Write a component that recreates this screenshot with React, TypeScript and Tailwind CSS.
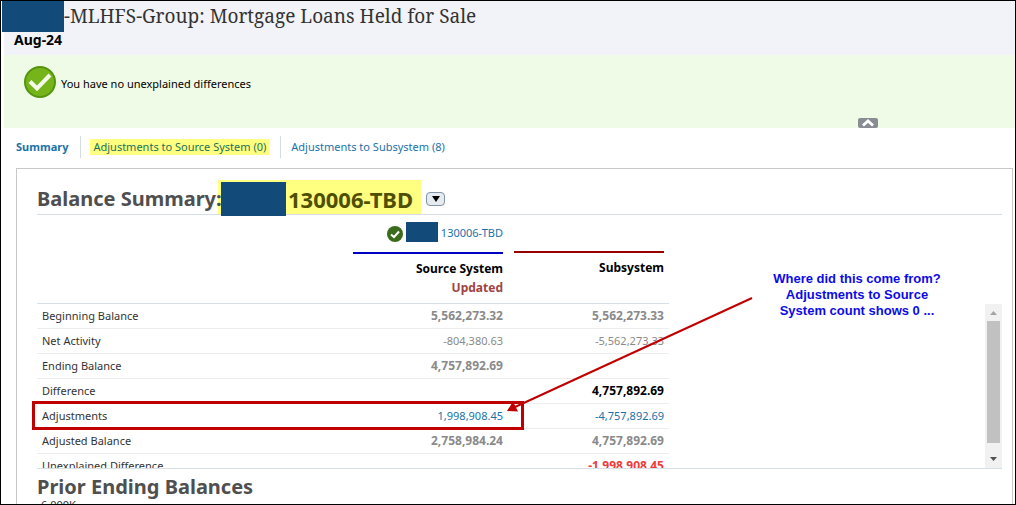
import { clsx } from "clsx";

type Cell = { text: string; className?: string; href?: string };
type Row = { label: string; source?: Cell; subsystem?: Cell };

const muted = "text-[12px] font-bold text-[#8a8a8a]";
const light = "text-[#8a8a8a]";
const link = "text-[#1a72aa]";

const rows: Row[] = [
  { label: "Beginning Balance", source: { text: "5,562,273.32", className: muted }, subsystem: { text: "5,562,273.33", className: muted } },
  { label: "Net Activity", source: { text: "-804,380.63", className: light }, subsystem: { text: "-5,562,273.33", className: light } },
  { label: "Ending Balance", source: { text: "4,757,892.69", className: muted } },
  { label: "Difference", subsystem: { text: "4,757,892.69", className: "text-[12px] font-bold text-black" } },
  {
    label: "Adjustments",
    source: { text: "1,998,908.45", className: link, href: "#source" },
    subsystem: { text: "-4,757,892.69", className: link, href: "#subsystem" },
  },
  { label: "Adjusted Balance", source: { text: "2,758,984.24", className: muted }, subsystem: { text: "4,757,892.69", className: muted } },
  { label: "Unexplained Difference", subsystem: { text: "-1,998,908.45", className: "text-[12px] font-bold text-[#f03a3a]" } },
];

function Redacted({ className }: { className: string }) {
  return <span aria-hidden="true" className={clsx("block shrink-0 bg-[#124b7a]", className)} />;
}

function Amount({ cell }: { cell?: Cell }) {
  return (
    <td className="border-b border-[#ededed] pr-[5px] text-right">
      {cell?.href ? (
        <a href={cell.href} className={cell.className}>
          {cell.text}
        </a>
      ) : (
        <span className={cell?.className}>{cell?.text}</span>
      )}
    </td>
  );
}

function PageHeader() {
  return (
    <header className="h-[54px] shrink-0 bg-[#f2f3f8]">
      <div className="-ml-[2px] flex h-[31px]">
        <Redacted className="h-[31px] w-[62px]" />
        <h1 className="font-['Noto_Serif','Liberation_Serif',serif] text-[19px] leading-[30px] whitespace-nowrap text-[#333]">
          -MLHFS-Group: Mortgage Loans Held for Sale
        </h1>
      </div>
      <p className="pl-[10px] text-[14px] leading-4 font-bold text-black">Aug-24</p>
    </header>
  );
}

function StatusBanner() {
  return (
    <section className="flex h-[73px] shrink-0 items-start justify-between bg-[#effbe7] pl-5">
      <div className="flex items-center gap-[5px] pt-[11px] text-black">
        <svg viewBox="0 0 32 32" className="h-8 w-8" aria-hidden="true">
          <circle cx="16" cy="16" r="15" fill="#75b51a" stroke="#56930f" strokeWidth="2" />
          <path d="M6 15.500 L13 22.500 L26 9" fill="none" stroke="#f4fbea" strokeWidth="4" />
        </svg>
        <span className="pt-1">You have no unexplained differences</span>
      </div>
      <button aria-label="Collapse" className="mr-[137px] h-[10px] w-5 self-end rounded-xs bg-[#898c92]">
        <svg viewBox="0 0 20 10" className="h-[10px] w-5" aria-hidden="true">
          <path d="M5 7.500 L10 3 L15 7.500" fill="none" stroke="#fff" strokeWidth="2.800" />
        </svg>
      </button>
    </section>
  );
}

function Tabs() {
  return (
    <nav className="flex h-10 shrink-0 items-start pt-2 pl-3 leading-[22px] text-[#1a72aa]">
      <a href="#summary" className="pr-3 font-bold">
        Summary
      </a>
      <span className="flex h-[22px] items-center border-l border-[#d3dbe4] pr-[11px] pl-[9px]">
        <a href="#source" className="bg-[#ffff80] px-[3px] leading-4 text-[#1a725a]">
          Adjustments to Source System (0)
        </a>
      </span>
      <a href="#subsystem" className="border-l border-[#d3dbe4] pl-[10px]">
        Adjustments to Subsystem (8)
      </a>
    </nav>
  );
}

function Scrollbar() {
  return (
    <div aria-hidden="true" className="mt-[89px] flex w-[17px] flex-col items-center bg-[#f1f1f1]">
      <svg viewBox="0 0 17 17" className="h-[17px] w-[17px]">
        <path d="M5 11 H12 L8.500 7 Z" fill="#a3a3a3" />
      </svg>
      <div className="h-[122px] w-[13px] bg-[#c1c1c1]" />
      <svg viewBox="0 0 17 17" className="mt-auto h-[17px] w-[17px]">
        <path d="M5 6 H12 L8.500 10 Z" fill="#505050" />
      </svg>
    </div>
  );
}

function BalanceTable() {
  return (
    <div className="flex h-[254px] justify-between overflow-hidden border-b border-[#d6dfe6]">
      <table className="h-fit w-[632px] table-fixed border-separate border-spacing-0">
        <thead>
          <tr className="h-[89px]">
            <th className="w-[311px] border-b border-[#d6dfe6]" />
            <th className="w-40 border-b border-[#d6dfe6] p-0 align-top">
              <div className="ml-[5px] flex h-[37px] items-start justify-end pt-[7px] pr-[5px] font-normal">
                <svg viewBox="0 0 16 16" className="mt-1 mr-[3px] h-4 w-4" aria-hidden="true">
                  <circle cx="8" cy="8" r="8" fill="#3b6b1c" />
                  <path d="M4 8.500 L7 11 L12 5.500" fill="none" stroke="#fff" strokeWidth="2" />
                </svg>
                <Redacted className="h-5 w-8" />
                <a href="#account" className="pl-[3px] leading-[22px] text-[#1a72aa]">
                  130006-TBD
                </a>
              </div>
              <div className="mr-[5px] ml-[5px] border-t-2 border-[#0000c4] pt-[5px] text-right text-[12px] leading-[19px]">
                <div className="text-black">Source System</div>
                <div className="text-[#a04343]">Updated</div>
              </div>
            </th>
            <th className="border-b border-[#d6dfe6] p-0 pt-9 align-top">
              <div className="mr-[5px] ml-[6px] border-t-2 border-[#980000] pt-[5px] text-right text-[12px] leading-[19px] text-black">Subsystem</div>
            </th>
          </tr>
        </thead>
        <tbody>
          {rows.map((row) => (
            <tr key={row.label} className="h-[25px]">
              <th scope="row" className="border-b border-[#ededed] pl-[5px] text-left font-normal text-[#333]">
                {row.label}
              </th>
              <Amount cell={row.source} />
              <Amount cell={row.subsystem} />
            </tr>
          ))}
        </tbody>
      </table>
      <Scrollbar />
    </div>
  );
}

// Markup drawn over the balance table
function Annotations() {
  return (
    <>
      <div className="pointer-events-none absolute top-[232px] left-[15px] h-[29px] w-[492px] border-3 border-[#c00000]" />
      <svg viewBox="0 0 250 118" className="pointer-events-none absolute top-[127px] left-[488px] h-[118px] w-[250px]" aria-hidden="true">
        <path d="M247 2 L10 111" stroke="#c00000" strokeWidth="2" />
        <path d="M2 115 L8 105.500 L13 115.500 Z" fill="#c00000" />
      </svg>
      <p className="absolute top-[102px] left-[740px] w-[200px] text-center font-['Liberation_Sans',Arial,sans-serif] text-[13px] leading-[16px] font-bold text-[#0b0bea]">
        Where did this come from?
        <br />
        Adjustments to Source
        <br />
        System count shows 0 ...
      </p>
    </>
  );
}

export default function App() {
  return (
    <div className="flex h-screen flex-col overflow-hidden border border-black bg-white pl-[3px] font-['Noto_Sans','Open_Sans',sans-serif] text-[11px] leading-4">
      <PageHeader />
      <StatusBanner />
      <Tabs />
      <main className="relative mr-[2px] ml-3 min-h-0 flex-1 border border-b-0 border-[#c8c8c8] pr-[10px] pl-5">
        <div className="flex h-[46px] items-start border-b border-[#d6dfe6] pt-[11px] text-[20px] leading-[38px] font-bold">
          <h2 className="relative w-[181px] whitespace-nowrap text-[#4f4f4f]">Balance Summary:</h2>
          <span className="flex h-[34px] bg-[#ffff80] pr-2 pl-[3px] text-[22px] text-[#4f4f00]">
            <Redacted className="relative mt-[2px] h-[34px] w-[65px]" />
            <span className="pl-[2px]">130006-TBD</span>
          </span>
          <button aria-label="Choose account" className="mt-3 ml-[5px] flex h-[14px] w-[19px] items-center justify-center rounded-sm border border-[#8293a5] bg-[#e6ebf0]">
            <svg viewBox="0 0 8 6" className="h-[6px] w-2" aria-hidden="true">
              <path d="M0 0 H8 L4 6 Z" fill="#000" />
            </svg>
          </button>
        </div>
        <BalanceTable />
        <h2 className="text-[20px] leading-9 font-bold text-[#4f4f4f]">Prior Ending Balances</h2>
        <div className="-mt-2 pl-1 text-[#333]">6,000K</div>
        <Annotations />
      </main>
    </div>
  );
}
